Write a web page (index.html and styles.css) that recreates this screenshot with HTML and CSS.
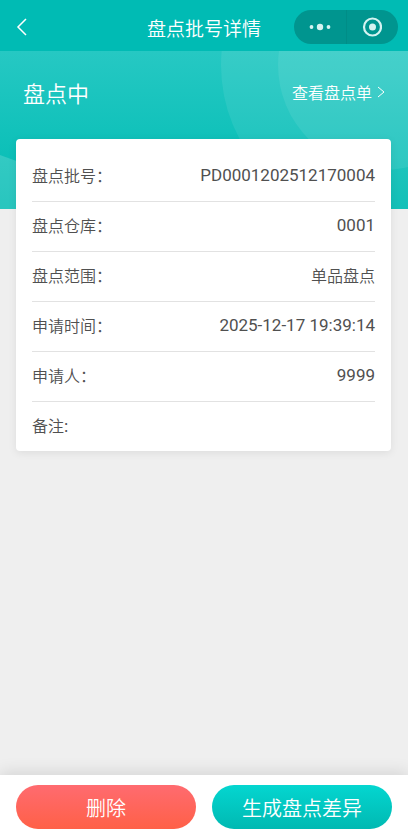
FILE: index.html
```html
<!DOCTYPE html>
<html lang="zh-CN">
<head>
<meta charset="utf-8">
<meta name="viewport" content="width=device-width, initial-scale=1">
<title>盘点批号详情</title>
<link rel="stylesheet" href="styles.css">
</head>
<body>
<div class="page">
  <header class="navbar">
    <button class="back" type="button" aria-label="返回">
      <svg width="12" height="18" viewBox="0 0 12 18"><path d="M10 1 2 9l8 8" fill="none" stroke="currentColor" stroke-width="1.5"/></svg>
    </button>
    <h1 class="title">盘点批号详情</h1>
    <div class="capsule">
      <button class="capsule-button" type="button" aria-label="更多">
        <svg width="22" height="8" viewBox="0 0 22 8" fill="currentColor"><circle cx="2.500" cy="4" r="1.900"/><circle cx="11" cy="4" r="3.200"/><circle cx="19.500" cy="4" r="1.900"/></svg>
      </button>
      <button class="capsule-button" type="button" aria-label="关闭">
        <svg width="20" height="20" viewBox="0 0 20 20"><circle cx="10.500" cy="10" r="8.500" fill="none" stroke="currentColor" stroke-width="2.200"/><circle cx="10.500" cy="10" r="3.500" fill="currentColor"/></svg>
      </button>
    </div>
  </header>

  <main class="content">
    <section class="hero">
      <svg class="hero-art" viewBox="0 0 408 158" preserveAspectRatio="none" aria-hidden="true">
        <circle cx="378" cy="14" r="157" fill="#fff" fill-opacity=".08"/>
        <circle cx="383" cy="14" r="105" fill="#fff" fill-opacity=".08"/>
        <path d="M0 104Q60 124 120 158H0Z" fill="#fff" fill-opacity=".16"/>
      </svg>
      <h2 class="status">盘点中</h2>
      <a class="view-link" href="#">查看盘点单
        <svg width="8" height="12" viewBox="0 0 8 12"><path d="m1 1 6 5-6 5" fill="none" stroke="currentColor"/></svg>
      </a>
    </section>

    <dl class="card">
      <div class="row"><dt>盘点批号：</dt><dd class="number">PD0001202512170004</dd></div>
      <div class="row"><dt>盘点仓库：</dt><dd class="number">0001</dd></div>
      <div class="row"><dt>盘点范围：</dt><dd>单品盘点</dd></div>
      <div class="row"><dt>申请时间：</dt><dd class="number">2025-12-17 19:39:14</dd></div>
      <div class="row"><dt>申请人：</dt><dd class="number">9999</dd></div>
      <div class="row"><dt>备注:</dt><dd></dd></div>
    </dl>
  </main>

  <footer class="actions">
    <button class="action danger" type="button">删除</button>
    <button class="action primary" type="button">生成盘点差异</button>
  </footer>
</div>
</body>
</html>
```
FILE: styles.css
```css
* { box-sizing: border-box; }

body {
  margin: 0;
  background: #efefef;
  color: #505050;
  font-family: "Noto Sans CJK SC", sans-serif;
  font-size: 16px;
  font-weight: 350;
}

button {
  margin: 0;
  padding: 0;
  border: 0;
  background: none;
  color: inherit;
  font: inherit;
}

svg { display: block; }

.page {
  display: flex;
  flex-direction: column;
  min-height: 100vh;
}

.navbar {
  display: grid;
  grid-template-columns: 1fr auto 1fr;
  align-items: center;
  padding: 10px 10px 7px;
  background: #00bbb4;
  color: #fff;
}

.back {
  justify-self: start;
  padding-left: 6px;
}

.title {
  margin: 0;
  padding-top: 2px;
  font-size: 19px;
  font-weight: inherit;
  line-height: 28px;
}

.capsule {
  display: flex;
  justify-self: end;
  width: 104px;
  max-width: 100%;
  height: 34px;
  border-radius: 17px;
  background: #00958f;
  color: #d5f3f1;
}

.capsule-button {
  display: grid;
  flex: 1;
  place-items: center;
}

.capsule-button + .capsule-button { border-left: 1px solid #008d87; }

.content { flex: 1; }

.hero {
  position: relative;
  display: flex;
  align-items: flex-start;
  justify-content: space-between;
  min-height: 158px;
  padding: 25px 23px 0;
  background: linear-gradient(#26c8c3, #12c2bb 50%, #00bbb2);
  color: #fff;
}

.hero-art {
  position: absolute;
  inset: 0;
  width: 100%;
  height: 100%;
}

.status,
.view-link {
  position: relative;
  line-height: 32px;
}

.status {
  margin: 0;
  font-size: 22px;
  font-weight: inherit;
}

.view-link {
  display: flex;
  align-items: center;
  gap: 5px;
  color: inherit;
  text-decoration: none;
}

.card {
  position: relative;
  margin: -70px 17px 24px 16px;
  padding: 13px 16px 0;
  border-radius: 4px;
  background: #fff;
  box-shadow: 0 2px 8px rgba(0, 0, 0, .08);
}

.row {
  display: flex;
  align-items: center;
  justify-content: space-between;
  min-height: 50px;
  padding-bottom: 4px;
  border-bottom: 1px solid #e2e2e2;
}

.row:last-child {
  min-height: 49px;
  border-bottom: 0;
}

.row dd { margin: 0; }

.row .number {
  font-family: Roboto, "Noto Sans CJK SC", sans-serif;
  font-size: 17px;
  font-weight: 400;
}

.actions {
  display: flex;
  gap: 16px;
  padding: 10px 16px 4px;
  background: #fff;
  box-shadow: 0 -2px 16px rgba(0, 0, 0, .12);
}

.action {
  flex: 1;
  height: 44px;
  border-radius: 22px;
  color: #fff;
  font-size: 20px;
}

.danger { background: linear-gradient(#ff6b70, #ff6047); }

.primary { background: linear-gradient(#04d6d0, #00b9b2); }
```
